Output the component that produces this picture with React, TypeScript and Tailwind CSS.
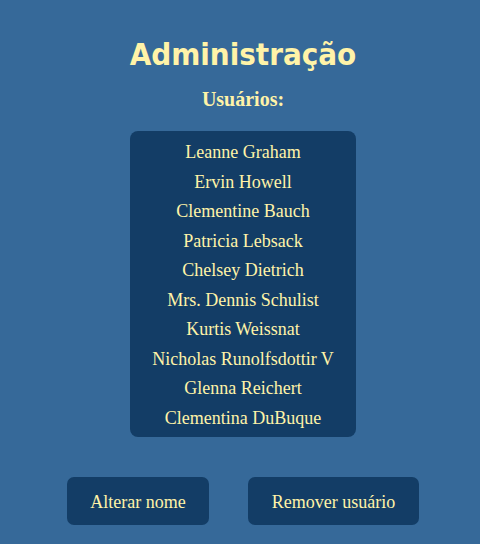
import React from "react";

const users = [
  "Leanne Graham",
  "Ervin Howell",
  "Clementine Bauch",
  "Patricia Lebsack",
  "Chelsey Dietrich",
  "Mrs. Dennis Schulist",
  "Kurtis Weissnat",
  "Nicholas Runolfsdottir V",
  "Glenna Reichert",
  "Clementina DuBuque",
];

export default function App() {
  const serif = { fontFamily: '"Liberation Serif", serif' };
  return (
    <div className="min-h-[544px] w-full bg-[#366999] text-[#fff3a8] flex flex-col items-center pl-[6px] pt-[34px]" style={serif}>
      <h1
        className="text-[31px] leading-[40px] font-bold"
        style={{ fontFamily: '"DejaVu Sans Condensed", "DejaVu Sans", sans-serif' }}
      >
        Administração
      </h1>
      <h2 className="mt-[14px] text-[20px] leading-[22px] font-bold">Usuários:</h2>
      <ul className="mt-[21px] w-[226px] rounded-[8px] bg-[#133d66] pt-[7px] pb-[4px] flex flex-col items-center">
        {users.map((u) => (
          <li key={u} className="text-[18px] leading-[29.5px] whitespace-nowrap">
            {u}
          </li>
        ))}
      </ul>
      <div className="mt-[40px] flex gap-[39px]">
        <button className="w-[142px] h-[48px] rounded-[7px] bg-[#133d66] text-[18px] text-[#fff3a8] pt-[2px]">
          Alterar nome
        </button>
        <button className="w-[171px] h-[48px] rounded-[7px] bg-[#133d66] text-[18px] text-[#fff3a8] pt-[2px]">
          Remover usuário
        </button>
      </div>
    </div>
  );
}
